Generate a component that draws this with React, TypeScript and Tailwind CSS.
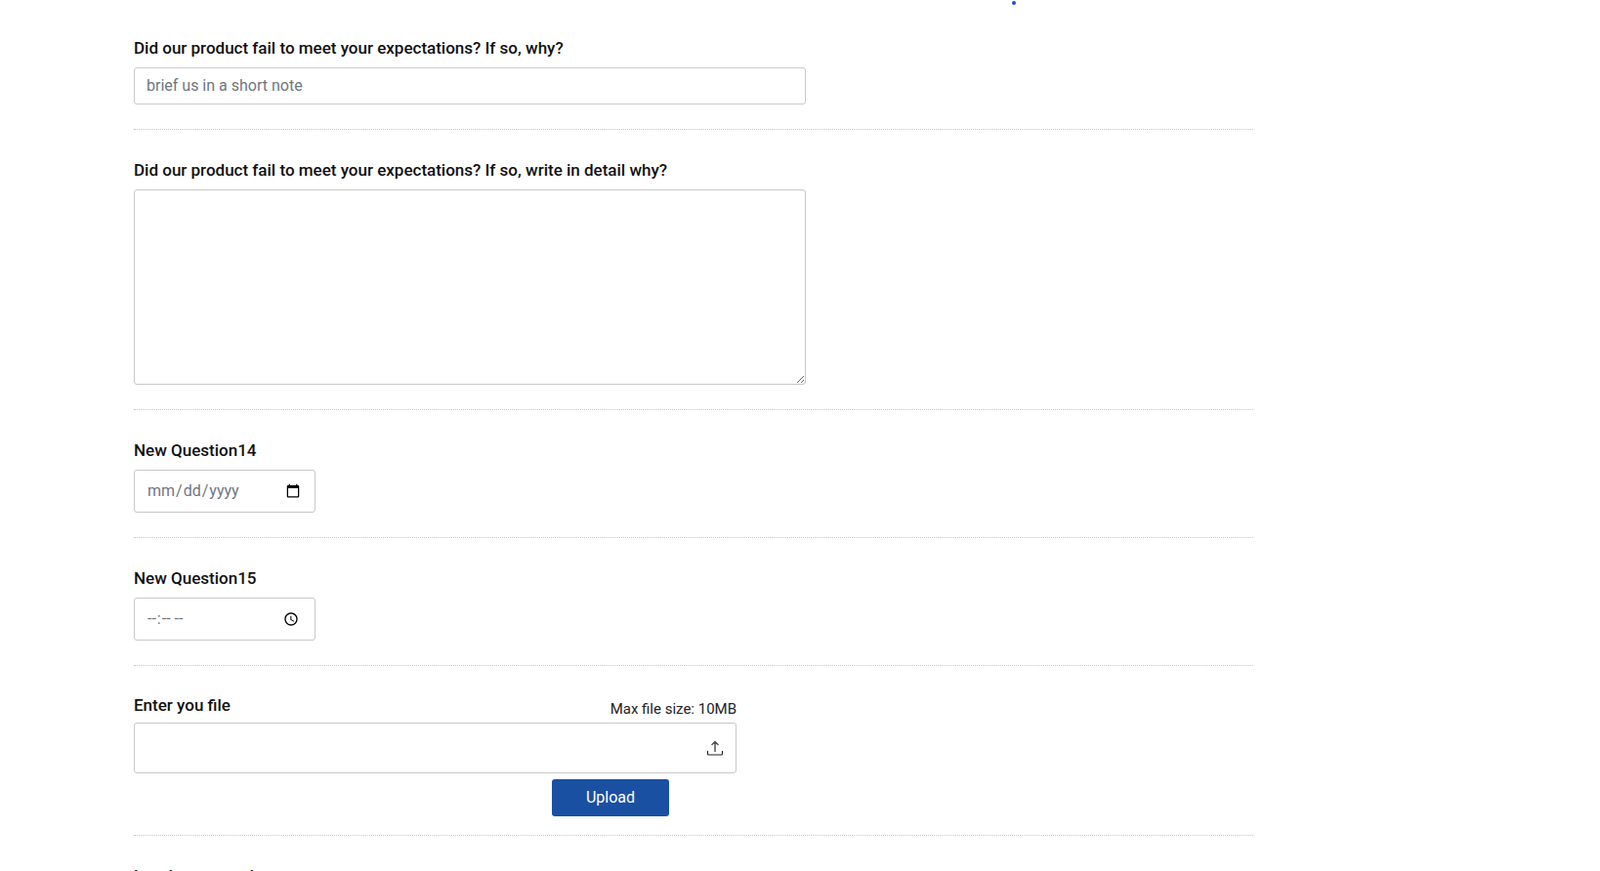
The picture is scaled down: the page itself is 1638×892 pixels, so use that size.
import React from "react";

function Sep() {
  return <div className="w-[1146px] border-t border-dotted border-[#c4c4c4]" />;
}
function Label({ children }: { children: React.ReactNode }) {
  return <div className="text-[17px] leading-[20px] font-medium text-[#111]">{children}</div>;
}

export default function App() {
  return (
    <div className="relative h-[892px] w-full overflow-hidden bg-white pl-[137px] font-['Roboto',sans-serif]">
      <div className="absolute left-[1036px] top-[1px] h-[4px] w-[4px] rounded-full bg-[#1a4fd6]" />
      <div className="pt-[39px]">
        <Label>Did our product fail to meet your expectations? If so, why?</Label>
        <input
          type="text"
          placeholder="brief us in a short note"
          className="mt-[10px] block h-[38px] w-[688px] rounded-[3px] border border-[#c9c9d1] pb-[2px] pl-[12px] text-[16px] outline-none placeholder:text-[#6f7680]"
        />
        <div className="mt-[25px]"><Sep /></div>

        <div className="mt-[31px]"><Label>Did our product fail to meet your expectations? If so, write in detail why?</Label></div>
        <textarea className="mt-[10px] block h-[200px] w-[688px] rounded-[3px] border border-[#c8c8c8] outline-none" />
        <div className="mt-[25px]"><Sep /></div>

        <div className="mt-[31px]"><Label>New Question14</Label></div>
        <input
          type="date"
          className="mt-[10px] block h-[44px] w-[186px] rounded-[3px] border border-[#c8c8c8] pl-[12px] pr-[12px] text-[16px] text-[#6f7680] outline-none"
        />
        <div className="mt-[25px]"><Sep /></div>

        <div className="mt-[31px]"><Label>New Question15</Label></div>
        <input
          type="time"
          className="mt-[10px] block h-[44px] w-[186px] rounded-[3px] border border-[#c8c8c8] pl-[12px] pr-[12px] text-[16px] text-[#6f7680] outline-none"
        />
        <div className="mt-[25px]"><Sep /></div>

        <div className="mt-[30px] flex w-[617px] items-end justify-between">
          <Label>Enter you file</Label>
          <span className="-mb-[3px] text-[15px] leading-[18px] text-[#222]">Max file size: 10MB</span>
        </div>
        <div className="mt-[8px] flex h-[52px] w-[617px] items-center justify-end rounded-[3px] border border-[#c8c8c8] pr-[12px]">
          <svg width="18" height="16" viewBox="0 0 18 16" fill="none">
            <path d="M9 12V2M5.5 5L9 1.5L12.5 5" stroke="#555" strokeWidth="1.5" />
            <path d="M1.5 11v3q0 1 1 1h13q1 0 1-1v-3" stroke="#222" strokeWidth="1.1" />
          </svg>
        </div>
        <button className="ml-[428px] mt-[6px] block h-[38px] w-[120px] rounded-[3px] bg-[#1a50a2] text-[16px] font-normal text-white">
          Upload
        </button>
        <div className="mt-[19px]"><Sep /></div>
        <div className="mt-[31px]"><Label>Level your usual</Label></div>
      </div>
    </div>
  );
}
